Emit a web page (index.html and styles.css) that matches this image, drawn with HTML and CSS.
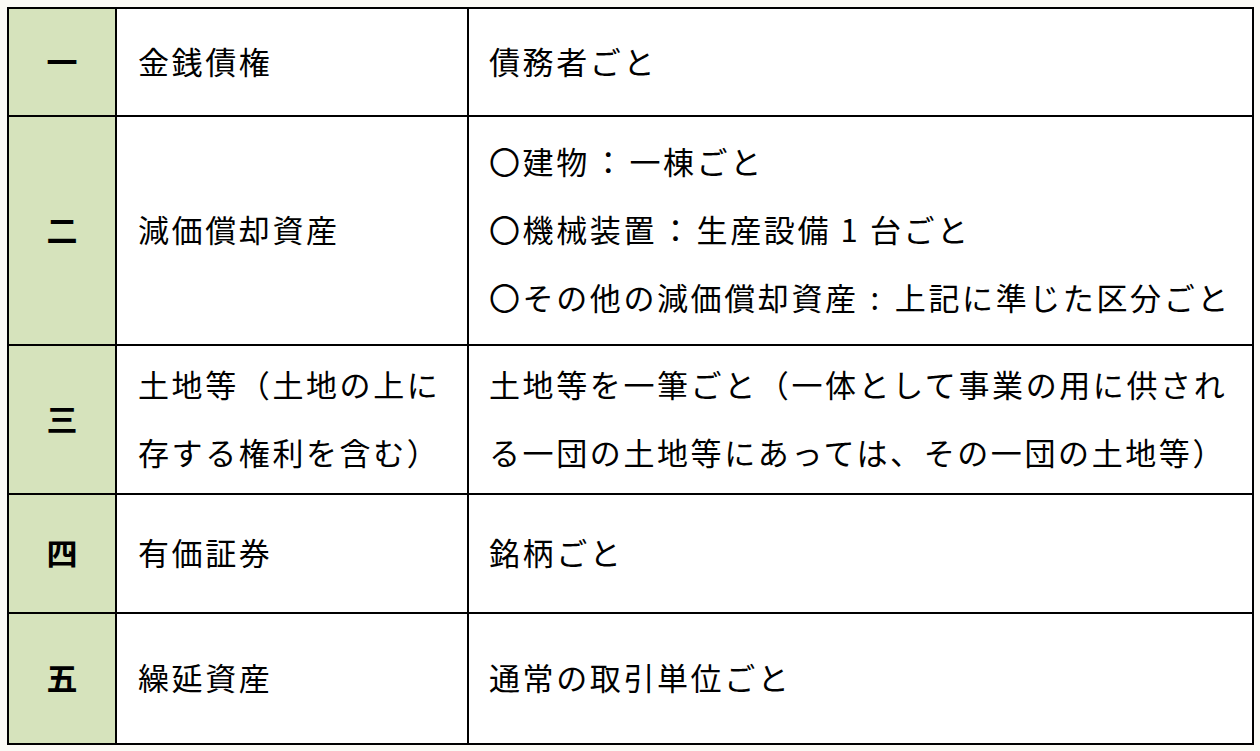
FILE: index.html
```html
<!DOCTYPE html>
<html lang="ja">
<head>
<meta charset="utf-8">
<title>資産の区分</title>
<link rel="stylesheet" href="styles.css">
</head>
<body>
<div class="grid">
  <div class="cell num">一</div>
  <div class="cell name">金銭債権</div>
  <div class="cell desc">債務者ごと</div>

  <div class="cell num">二</div>
  <div class="cell name">減価償却資産</div>
  <div class="cell desc">
    <div class="lines">
      <div>〇建物<span class="colon">：</span>一棟ごと</div>
      <div>〇機械装置<span class="colon">：</span>生産設備<span class="digit"> 1 </span>台ごと</div>
      <div>〇その他の減価償却資産<span class="colon-narrow">:</span>上記に準じた区分ごと</div>
    </div>
  </div>

  <div class="cell num">三</div>
  <div class="cell name">
    <div class="lines">
      <div>土地等（土地の上に</div>
      <div>存する権利を含む）</div>
    </div>
  </div>
  <div class="cell desc">
    <div class="lines">
      <div>土地等を一筆ごと（一体として事業の用に供され</div>
      <div>る一団の土地等にあっては、その一団の土地等）</div>
    </div>
  </div>

  <div class="cell num">四</div>
  <div class="cell name">有価証券</div>
  <div class="cell desc">銘柄ごと</div>

  <div class="cell num">五</div>
  <div class="cell name">繰延資産</div>
  <div class="cell desc">通常の取引単位ごと</div>
</div>
</body>
</html>
```

FILE: styles.css
```css
html, body {
  margin: 0;
  padding: 0;
  background: #fbfaf5;
}

body {
  padding: 7px;
  font-family: "Noto Sans CJK JP", "Noto Sans", sans-serif;
  color: #000;
}

.grid {
  display: grid;
  grid-template-columns: 108px 352px 785px;
  grid-template-rows: 108px 229px 149px 119px 131px;
  width: max-content;
  border-top: 2px solid #000;
  border-left: 2px solid #000;
  background: #fff;
}

.cell {
  box-sizing: border-box;
  border-right: 2px solid #000;
  border-bottom: 2px solid #000;
  display: flex;
  align-items: center;
  padding-bottom: 3px;
  font-size: 31px;
  letter-spacing: 2.6px;
  white-space: nowrap;
  line-height: 68px;
}

.num {
  background: #d6e3bc;
  justify-content: center;
  font-weight: 700;
  letter-spacing: 0;
}

.name {
  padding-left: 21px;
}

.desc {
  padding-left: 20px;
}

.lines {
  display: flex;
  flex-direction: column;
}

.colon {
  margin: 0 3px;
}

.colon-narrow {
  margin: 0 13px 0 12px;
}
```
